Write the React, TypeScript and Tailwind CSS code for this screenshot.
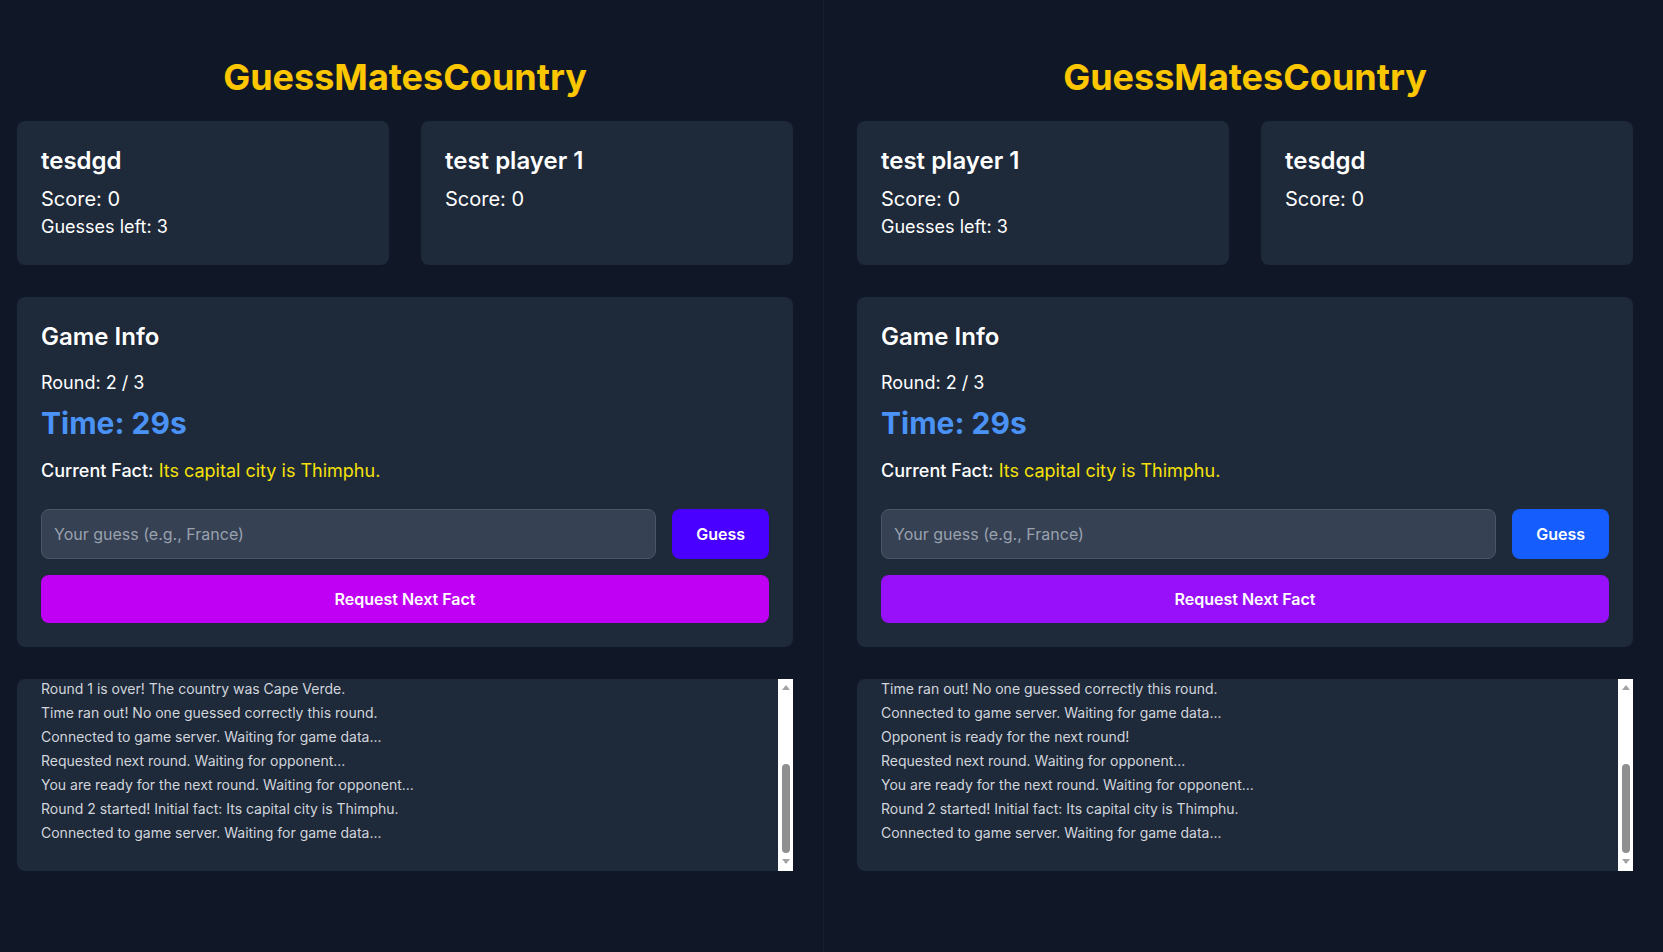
type Player = { name: string; score: number; guessesLeft?: number };

type PaneProps = {
  players: Player[];
  guessColor: string;
  nextColor: string;
  logs: string[];
  className: string;
};

function PlayerCard({ player }: { player: Player }) {
  return (
    <div className="bg-[#1e2939] rounded-lg p-6">
      <h2 className="text-2xl font-semibold mb-2">{player.name}</h2>
      <p className="text-xl">Score: {player.score}</p>
      {player.guessesLeft !== undefined && (
        <p className="text-lg">Guesses left: {player.guessesLeft}</p>
      )}
    </div>
  );
}

function FakeScrollbar() {
  return (
    <div className="w-[15px] shrink-0 bg-white flex flex-col items-center pt-[6px]">
      <div className="w-0 h-0 border-l-[4px] border-r-[4px] border-b-[5px] border-l-transparent border-r-transparent border-b-[#a3a3a3]" />
      <div className="mt-[74px] w-[8px] h-[89px] rounded-full bg-[#8f8f8f]" />
      <div className="mt-[6px] w-0 h-0 border-l-[4px] border-r-[4px] border-t-[5px] border-l-transparent border-r-transparent border-t-[#a3a3a3]" />
    </div>
  );
}

function GamePane({ players, guessColor, nextColor, logs, className }: PaneProps) {
  return (
    <div className={className}>
      <div className="w-[776px]">
        <h1 className="text-4xl font-bold text-yellow-400 text-center mb-6">GuessMatesCountry</h1>

        <div className="grid grid-cols-2 gap-8">
          {players.map((p) => (
            <PlayerCard key={p.name} player={p} />
          ))}
        </div>

        <div className="bg-[#1e2939] rounded-lg p-6 mt-8">
          <h2 className="text-2xl font-semibold mb-4">Game Info</h2>
          <p className="text-lg mb-2">Round: 2 / 3</p>
          <p className="text-3xl font-bold text-[#4a92f5] mb-4">Time: 29s</p>
          <p className="text-lg mb-6">
            <span className="font-medium">Current Fact:</span>{" "}
            <span className="text-[#f5e10a]">Its capital city is Thimphu.</span>
          </p>

          <div className="flex gap-4">
            <input
              type="text"
              placeholder="Your guess (e.g., France)"
              className="flex-1 bg-[#364153] border border-[#4a5565] rounded-lg px-3 py-3 text-base text-white placeholder:text-[#99a1af] outline-none"
            />
            <button className={`${guessColor} text-white font-semibold px-6 rounded-lg`}>Guess</button>
          </div>

          <button className={`${nextColor} w-full mt-4 py-3 rounded-lg text-white font-semibold`}>
            Request Next Fact
          </button>
        </div>

        <div className="flex h-[192px] mt-8">
          <div className="flex-1 bg-[#1e2939] rounded-l-lg overflow-hidden flex flex-col justify-end px-6 pb-6">
            {logs.map((line, i) => (
              <p key={i} className="text-sm text-[#d1d5dc] mb-1">
                {line}
              </p>
            ))}
          </div>
          <FakeScrollbar />
        </div>
      </div>
    </div>
  );
}

export default function App() {
  return (
    <div
      className="flex h-[952px] bg-[#101828] text-white overflow-hidden"
      style={{ fontFamily: "Inter, 'Noto Sans', sans-serif" }}
    >
      <GamePane
        className="w-[824px] shrink-0 pl-[17px] pt-[57px] border-r border-[#161e2d]"
        players={[
          { name: "tesdgd", score: 0, guessesLeft: 3 },
          { name: "test player 1", score: 0 },
        ]}
        guessColor="bg-[#4900ff]"
        nextColor="bg-[#c000f5]"
        logs={[
          "Round 1 is over! The country was Cape Verde.",
          "Time ran out! No one guessed correctly this round.",
          "Connected to game server. Waiting for game data...",
          "Requested next round. Waiting for opponent...",
          "You are ready for the next round. Waiting for opponent...",
          "Round 2 started! Initial fact: Its capital city is Thimphu.",
          "Connected to game server. Waiting for game data...",
        ]}
      />
      <GamePane
        className="flex-1 pl-[33px] pt-[57px]"
        players={[
          { name: "test player 1", score: 0, guessesLeft: 3 },
          { name: "tesdgd", score: 0 },
        ]}
        guessColor="bg-[#155dfc]"
        nextColor="bg-[#9810fa]"
        logs={[
          "Time ran out! No one guessed correctly this round.",
          "Connected to game server. Waiting for game data...",
          "Opponent is ready for the next round!",
          "Requested next round. Waiting for opponent...",
          "You are ready for the next round. Waiting for opponent...",
          "Round 2 started! Initial fact: Its capital city is Thimphu.",
          "Connected to game server. Waiting for game data...",
        ]}
      />
    </div>
  );
}
